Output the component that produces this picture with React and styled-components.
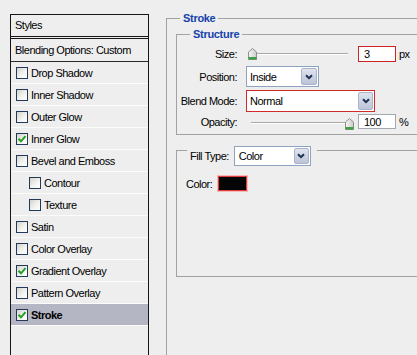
import React from 'react';
import styled, { createGlobalStyle } from 'styled-components';

const Global = createGlobalStyle`
  html, body { margin: 0; padding: 0; background: #eeeeee; overflow: hidden; }
  body {
    font-family: "Liberation Sans", Arial, sans-serif;
    font-size: 11px;
    color: #000;
    letter-spacing: -0.5px;
  }
  * { box-sizing: border-box; }
`;

const Page = styled.div`
  display: flex;
  align-items: flex-start;
  width: 417px;
  height: 355px;
  overflow: hidden;
  background: #eeeeee;
`;

/* ---------- left styles list ---------- */
const StylesPanel = styled.div`
  flex: 0 0 auto;
  width: 139px;
  height: 341px;
  margin: 14px 0 0 10px;
  border: 1px solid #161616;
  border-bottom: none;
  display: flex;
  flex-direction: column;
`;

const PanelHeader = styled.div`
  height: 24px;
  line-height: 21px;
  padding-left: 4px;
  border-bottom: 3px double #161616;
`;

const BlendRow = styled.div`
  height: 23px;
  line-height: 22px;
  padding-left: 4px;
  border-bottom: 1px solid #2a2a2a;
`;

const StyleItem = styled.div`
  height: 22px;
  display: flex;
  align-items: center;
  gap: 3px;
  padding-left: ${p => (p.$indent ? 18 : 5)}px;
  border-bottom: 1px solid #fbfbfb;
  background: ${p => (p.$active ? '#b5b6c4' : 'transparent')};
  font-weight: ${p => (p.$active ? 700 : 400)};
`;

const CheckBox = styled.span`
  flex: 0 0 auto;
  width: 12px;
  height: 12px;
  border: 1px solid #24395a;
  background: linear-gradient(135deg, #d3d3cd 0%, #f4f4f1 60%, #ffffff 100%);
  display: flex;
  align-items: center;
  justify-content: center;
`;

/* ---------- right settings ---------- */
const GroupBox = styled.fieldset`
  flex: 0 0 auto;
  margin: ${p => p.$m || '0'};
  width: ${p => p.$w}px;
  height: ${p => (p.$h ? `${p.$h}px` : 'auto')};
  min-width: 0;
  border: 1px solid #a2a2a2;
  padding: ${p => p.$pad || '0'};
`;

const GroupTitle = styled.legend`
  margin-left: ${p => p.$ml}px;
  padding: ${p => p.$pt || 0}px 3px 0 3px;
  line-height: 13px;
  font-weight: 700;
  color: #1542ac;
  letter-spacing: -0.3px;
`;

const LegendInner = styled.div`
  display: flex;
  align-items: center;
  gap: 5px;
  font-weight: 400;
  color: #000;
  padding-right: 3px;
  letter-spacing: -0.5px;
`;

const FormRow = styled.div`
  display: grid;
  grid-template-columns: 60px auto;
  column-gap: 9px;
  align-items: center;
  height: ${p => p.$h}px;
  margin-top: ${p => p.$mt}px;
`;

const RowLabel = styled.span`
  text-align: right;
`;

const Controls = styled.div`
  display: flex;
  align-items: center;
  gap: ${p => p.$gap ?? 3}px;
  height: 100%;
`;

const Slider = styled.div`
  position: relative;
  width: 108px;
  height: 100%;
  display: flex;
  align-items: center;
  padding: 0 6px 0 5px;
  margin-right: 1px;
`;

const Track = styled.div`
  flex: 1;
  height: 2px;
  border-top: 1px solid #a8a8a8;
  border-bottom: 1px solid #ffffff;
  margin-top: ${p => p.$dy || 0}px;
`;

const Thumb = styled.svg`
  position: absolute;
  top: 50%;
  margin-top: ${p => -6 + (p.$dy || 0)}px;
`;

const NumberField = styled.div`
  width: 38px;
  height: ${p => p.$h}px;
  background: #fff;
  border: 1px solid ${p => (p.$alert ? '#cf2222' : '#a2a8b0')};
  padding-left: 5px;
  display: flex;
  align-items: center;
`;

const SelectBox = styled.div`
  width: ${p => p.$w}px;
  height: ${p => p.$h}px;
  display: flex;
  align-items: stretch;
  background: #fff;
  border: 1px solid ${p => (p.$alert ? '#d12a2a' : '#8ea3bf')};
  padding: 1px;
`;

const SelectValue = styled.span`
  flex: 1;
  display: flex;
  align-items: center;
  padding-left: ${p => p.$pad ?? 2}px;
`;

const SelectArrow = styled.span`
  width: ${p => p.$w || 15}px;
  display: flex;
  align-items: center;
  justify-content: center;
  background: linear-gradient(#dfe3ee, #bcc4d8);
  border: 1px solid #aab4cb;
  border-radius: 2px;
`;

const ColorRow = styled.div`
  display: flex;
  align-items: center;
  gap: 5px;
  height: 17px;
  margin-top: ${p => p.$mt}px;
  padding-left: 9px;
`;

const Swatch = styled.div`
  width: 29px;
  height: 15px;
  margin-left: 1px;
  background: #050505;
  border: 1px solid #e23b3b;
  box-shadow: 0 0 0 1px #f4b9b9;
`;

const GreenCheck = () => (
  <svg width="10" height="10" viewBox="0 0 10 10">
    <path d="M1.5 4.8 L4 7.3 L8.5 2.2" fill="none" stroke="#25a025" strokeWidth="2" />
  </svg>
);

const Chevron = () => (
  <svg width="8" height="6" viewBox="0 0 8 6">
    <path d="M1 1.2 L4 4.2 L7 1.2" fill="none" stroke="#1e2f52" strokeWidth="2" />
  </svg>
);

const SliderThumb = ({ left, dy }) => (
  <Thumb width="9" height="12" viewBox="0 0 9 12" style={{ left }} $dy={dy}>
    <defs>
      <linearGradient id="tg" x1="0" y1="0" x2="1" y2="0">
        <stop offset="0" stopColor="#f6f6f6" />
        <stop offset="1" stopColor="#c9cbc9" />
      </linearGradient>
    </defs>
    <path d="M4.5 0.5 L8.5 4 L8.5 11.5 L0.5 11.5 L0.5 4 Z" fill="url(#tg)" stroke="#8b908b" />
    <rect x="0.5" y="9" width="8" height="2.5" fill="#3f9f45" />
  </Thumb>
);

const Select = ({ w, h, value, alert, pad, arrowW }) => (
  <SelectBox $w={w} $h={h} $alert={alert}>
    <SelectValue $pad={pad}>{value}</SelectValue>
    <SelectArrow $w={arrowW}>
      <Chevron />
    </SelectArrow>
  </SelectBox>
);

const styleItems = [
  { label: 'Drop Shadow' },
  { label: 'Inner Shadow' },
  { label: 'Outer Glow' },
  { label: 'Inner Glow', checked: true },
  { label: 'Bevel and Emboss' },
  { label: 'Contour', indent: true },
  { label: 'Texture', indent: true },
  { label: 'Satin' },
  { label: 'Color Overlay' },
  { label: 'Gradient Overlay', checked: true },
  { label: 'Pattern Overlay' },
  { label: 'Stroke', checked: true, active: true },
];

export default function App() {
  return (
    <>
      <Global />
      <Page>
        <StylesPanel>
          <PanelHeader>Styles</PanelHeader>
          <BlendRow>Blending Options: Custom</BlendRow>
          {styleItems.map(item => (
            <StyleItem key={item.label} $indent={item.indent} $active={item.active}>
              <CheckBox>{item.checked && <GreenCheck />}</CheckBox>
              <span>{item.label}</span>
            </StyleItem>
          ))}
        </StylesPanel>

        <GroupBox $m="12px 0 0 17px" $w={280} $h={420} $pad="0 0 0 9px">
          <GroupTitle $ml={4}>Stroke</GroupTitle>

          <GroupBox $m="3px 0 0 0" $w={270} $pad="0 0 6px 0">
            <GroupTitle $ml={13}>Structure</GroupTitle>

            <FormRow $h={16} $mt={5}>
              <RowLabel>Size:</RowLabel>
              <Controls>
                <Slider>
                  <Track />
                  <SliderThumb left={2} />
                </Slider>
                <NumberField $h={16} $alert>3</NumberField>
                <span>px</span>
              </Controls>
            </FormRow>

            <FormRow $h={21} $mt={4}>
              <RowLabel>Position:</RowLabel>
              <Controls>
                <Select w={73} h={21} value="Inside" arrowW={16} />
              </Controls>
            </FormRow>

            <FormRow $h={22} $mt={3}>
              <RowLabel>Blend Mode:</RowLabel>
              <Controls>
                <Select w={129} h={22} value="Normal" alert />
              </Controls>
            </FormRow>

            <FormRow $h={14} $mt={2}>
              <RowLabel>Opacity:</RowLabel>
              <Controls>
                <Slider>
                  <Track $dy={2} />
                  <SliderThumb left={99} dy={2} />
                </Slider>
                <NumberField $h={15}>100</NumberField>
                <span>%</span>
              </Controls>
            </FormRow>
          </GroupBox>

          <GroupBox $m="0" $w={270} $pad="0 0 84px 0">
            <GroupTitle $ml={10} $pt={11}>
              <LegendInner>
                <span>Fill Type:</span>
                <Select w={77} h={20} value="Color" pad={3} />
              </LegendInner>
            </GroupTitle>
            <ColorRow $mt={9}>
              <span>Color:</span>
              <Swatch />
            </ColorRow>
          </GroupBox>
        </GroupBox>
      </Page>
    </>
  );
}
